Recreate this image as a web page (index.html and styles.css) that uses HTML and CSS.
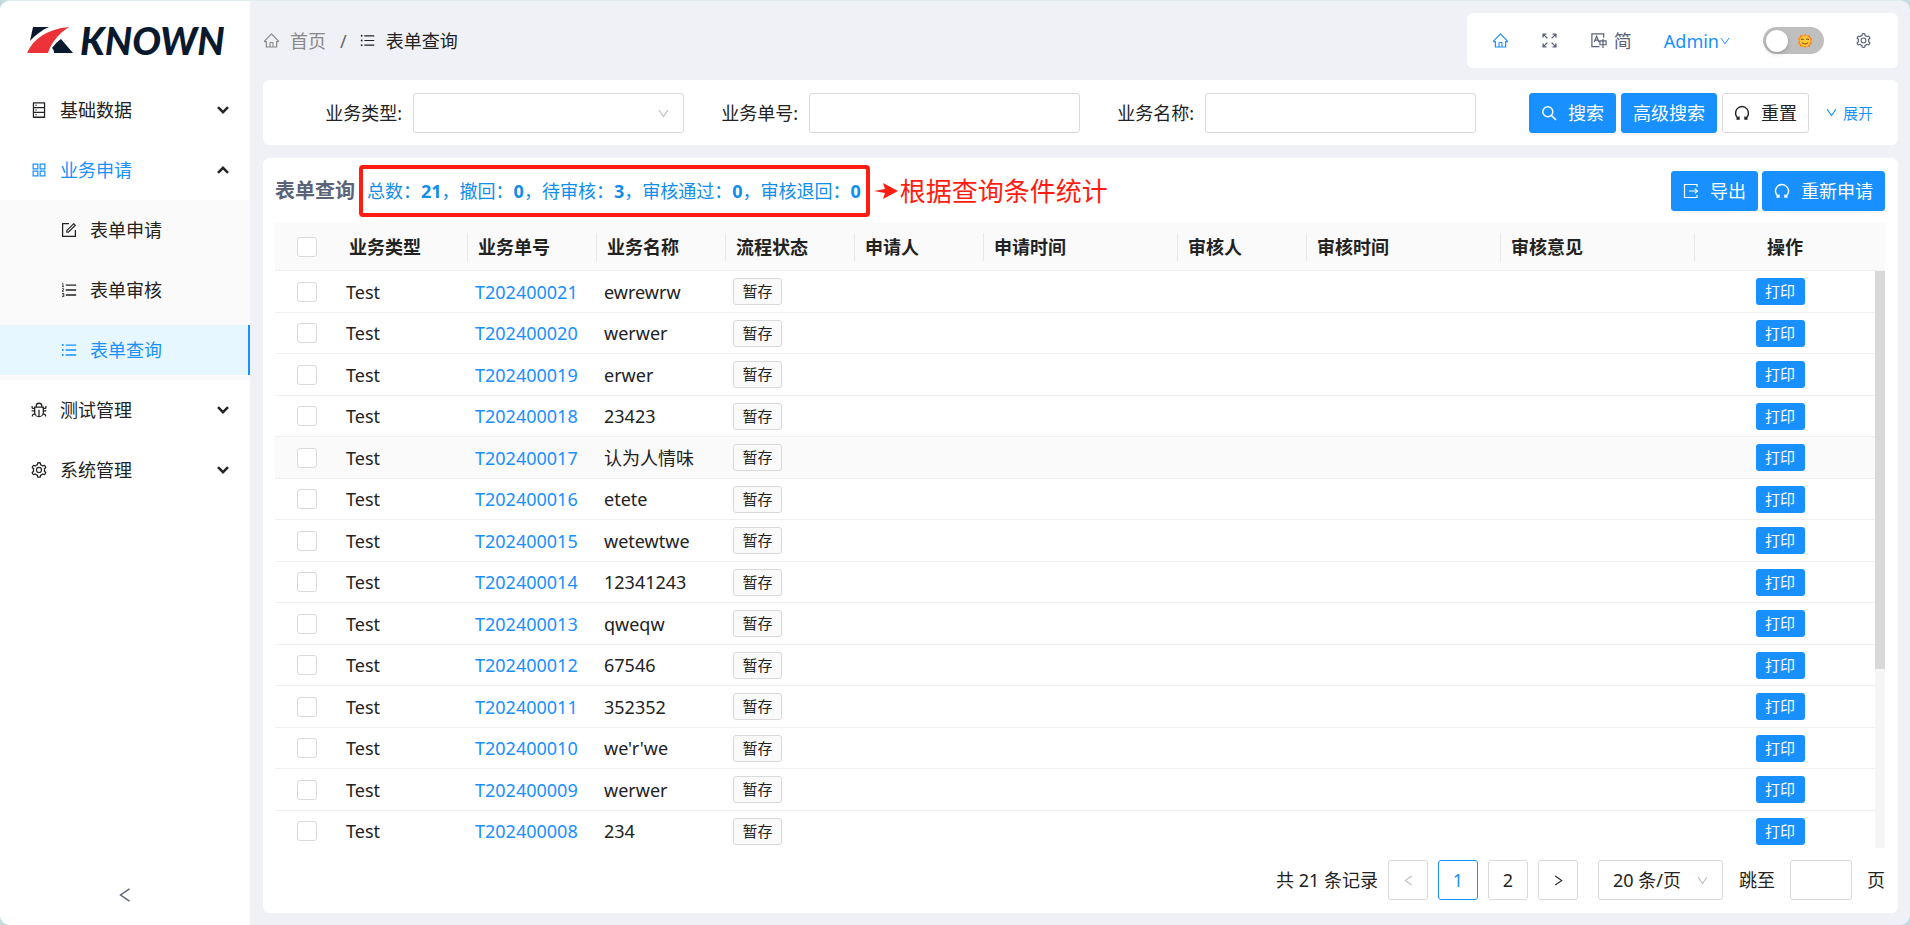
FILE: index.html
```html
<!DOCTYPE html>
<html lang="zh-CN">
<head>
<meta charset="utf-8">
<title>表单查询</title>
<link rel="stylesheet" href="styles.css">
</head>
<body>
<svg class="sprite" aria-hidden="true">
  <symbol id="i-home" viewBox="0 0 1024 1024"><path d="M946.5 505L534.2 92.9a31.5 31.5 0 00-44.4 0L77.5 505a63.9 63.9 0 00-18.8 46c.4 35.2 29.7 63.3 64.9 63.3h42.5V940h691.8V614.3h43.4c17.1 0 33.2-6.7 45.3-18.8a63.6 63.6 0 0018.7-45.3c0-17-6.7-33.1-18.8-45.2zM568 868H456V664h112v204zm217.9-325.7V868H632V640c0-22.1-17.9-40-40-40H432c-22.1 0-40 17.9-40 40v228H238.1V542.3h-96l370-369.7 23.1 23.1L882 542.3h-96.1z"/></symbol>
  <symbol id="i-list" viewBox="0 0 1024 1024"><path d="M320 192h600v72H320zM320 476h600v72H320zM320 760h600v72H320zM104 228a56 56 0 10112 0 56 56 0 10-112 0zM104 512a56 56 0 10112 0 56 56 0 10-112 0zM104 796a56 56 0 10112 0 56 56 0 10-112 0z"/></symbol>
  <symbol id="i-olist" viewBox="0 0 1024 1024"><path d="M328 192h592v72H328zM328 476h592v72H328zM328 760h592v72H328z"/><path class="line" stroke-width="48" d="M120 150h48v170M112 320h112M112 440h96v60l-96 84h112M112 710h104v176H112M136 796h80"/></symbol>
  <symbol id="i-database" viewBox="0 0 1024 1024"><path d="M832 64H192c-17.7 0-32 14.3-32 32v832c0 17.7 14.3 32 32 32h640c17.7 0 32-14.3 32-32V96c0-17.7-14.3-32-32-32zm-600 72h560v208H232V136zm560 480H232V408h560v208zm0 272H232V680h560v208zM304 240a40 40 0 1080 0 40 40 0 10-80 0zm0 272a40 40 0 1080 0 40 40 0 10-80 0zm0 272a40 40 0 1080 0 40 40 0 10-80 0z"/></symbol>
  <symbol id="i-apps" viewBox="0 0 1024 1024"><path class="line" stroke-width="68" d="M178 178h268v268H178zM578 178h268v268H578zM178 578h268v268H178zM578 578h268v268H578z"/></symbol>
  <symbol id="i-form" viewBox="0 0 1024 1024"><path d="M904 512h-56c-4.400 0-8 3.600-8 8v320H184V184h320c4.400 0 8-3.600 8-8v-56c0-4.400-3.600-8-8-8H144c-17.700 0-32 14.300-32 32v736c0 17.700 14.300 32 32 32h736c17.700 0 32-14.300 32-32V520c0-4.400-3.600-8-8-8z"/><path d="M355.900 534.900L354 653.800c-.1 8.900 7.100 16.200 16 16.200h.4l118-2.900c2-.1 4-.9 5.400-2.300l415.900-415c3.100-3.100 3.100-8.200 0-11.300L785.400 114.300c-1.600-1.600-3.600-2.300-5.700-2.300s-4.100.8-5.700 2.300l-415.800 415a8.300 8.300 0 00-2.300 5.600zm63.500 23.600L779.700 199l45.200 45.100-360.500 359.700-45.700 1.100.7-46.400z"/></symbol>
  <symbol id="i-bug" viewBox="0 0 1024 1024"><path class="line" stroke-width="72" d="M268 348h488v300a244 244 0 01-488 0zM352 340v-52a160 160 0 01320 0v52M512 500v380M90 556h170M764 556h170M120 280v90q0 56 60 56h80M904 280v90q0 56-60 56h-80M136 880v-60q0-70 130-92M888 880v-60q0-70-130-92"/></symbol>
  <symbol id="i-gear" viewBox="0 0 1024 1024"><path d="M924.8 625.7l-65.5-56c3.1-19 4.7-38.4 4.7-57.8s-1.6-38.8-4.7-57.8l65.5-56a32.03 32.03 0 009.3-35.2l-.9-2.6a443.74 443.74 0 00-79.7-137.9l-1.8-2.1a32.12 32.12 0 00-35.1-9.5l-81.3 28.9c-30-24.6-63.5-44-99.7-57.6l-15.7-85a32.05 32.05 0 00-25.8-25.7l-2.7-.5c-52.1-9.4-106.9-9.4-159 0l-2.700.5a32.05 32.05 0 00-25.8 25.7l-15.8 85.4a351.86 351.86 0 00-99 57.4l-81.9-29.1a32 32 0 00-35.1 9.5l-1.8 2.1a446.02 446.02 0 00-79.7 137.9l-.9 2.6c-4.5 12.5-.8 26.5 9.3 35.2l66.3 56.6c-3.1 18.8-4.6 38-4.6 57.1 0 19.2 1.5 38.4 4.6 57.1L99 625.5a32.03 32.03 0 00-9.300 35.200l.9 2.600c18.100 50.400 44.900 96.900 79.700 137.900l1.800 2.100a32.12 32.12 0 0035.100 9.500l81.900-29.100c29.800 24.500 63.100 43.900 99 57.400l15.800 85.400a32.05 32.05 0 0025.800 25.700l2.700.5a449.4 449.4 0 00159 0l2.700-.5a32.05 32.05 0 0025.800-25.700l15.700-85a350 350 0 0099.700-57.600l81.300 28.900a32 32 0 0035.100-9.500l1.800-2.100c34.800-41.100 61.600-87.500 79.700-137.900l.9-2.600c4.500-12.300.8-26.300-9.300-35zM788.300 465.900c2.500 15.100 3.800 30.600 3.800 46.100s-1.300 31-3.800 46.100l-6.600 40.100 74.700 63.900a370.03 370.03 0 01-42.600 73.600L721 702.800l-31.400 25.800c-23.900 19.600-50.500 35-79.300 45.800l-38.100 14.300-17.900 97a377.5 377.5 0 01-85 0l-17.900-97.200-37.800-14.500c-28.500-10.800-55-26.200-78.700-45.700l-31.400-25.900-93.400 33.200c-17-22.900-31.200-47.600-42.600-73.600l75.500-64.500-6.500-40c-2.400-14.900-3.700-30.300-3.700-45.500 0-15.300 1.200-30.600 3.700-45.500l6.500-40-75.500-64.500c11.300-26.100 25.600-50.700 42.600-73.600l93.400 33.200 31.400-25.900c23.700-19.500 50.200-34.900 78.700-45.700l37.900-14.300 17.900-97.200c28.100-3.200 56.800-3.200 85 0l17.900 97 38.100 14.300c28.700 10.800 55.400 26.200 79.300 45.800l31.400 25.800 92.800-32.900c17 22.900 31.200 47.600 42.600 73.600L781.800 426l6.500 39.900z"/><circle class="line" stroke-width="66" cx="512" cy="508" r="144"/></symbol>
  <symbol id="i-full" viewBox="0 0 16 16"><path class="line" stroke-width="1.300" d="M2 5.200V2h3.200M2 2l4 4M10.800 2H14v3.200M14 2l-4 4M2 10.800V14h3.200M2 14l4-4M14 10.800V14h-3.200M14 14l-4-4"/></symbol>
  <symbol id="i-lang" viewBox="0 0 18 18"><path class="line" stroke-width="1.300" d="M14.500 6V2H2v13.500h8M4.500 10.500l2.500-6 2.500 6M5.400 8.500h3.200M10.500 9.500h6.500v4h-6.500zM13.750 7.500v9.500"/></symbol>
  <symbol id="i-down" viewBox="0 0 16 16"><path class="line" stroke-width="1.300" d="M2.500 3.800L8 11.800l5.500-8"/></symbol>
  <symbol id="i-left" viewBox="0 0 16 16"><path class="line" stroke-width="1.300" d="M12 2.500L4 8l8 5.500"/></symbol>
  <symbol id="i-right" viewBox="0 0 16 16"><path class="line" stroke-width="1.300" d="M4 2.500L12 8l-8 5.500"/></symbol>
  <symbol id="i-arrow" viewBox="0 0 14 14"><path class="line" stroke-width="2.400" d="M2 4.200l5 5 5-5"/></symbol>
  <symbol id="i-search" viewBox="0 0 16 16"><circle class="line" stroke-width="1.400" cx="6.800" cy="6.800" r="5"/><path class="line" stroke-width="1.600" d="M10.400 10.400l4.600 4.600"/></symbol>
  <symbol id="i-redo" viewBox="0 0 16 16"><path class="line" stroke-width="1.400" d="M4.600 13.600A6.500 6.500 0 1111.400 13.600M2.400 14h2.600v-2.400M13.600 14H11v-2.400"/></symbol>
  <symbol id="i-export" viewBox="0 0 16 16"><path class="line" stroke-width="1.200" d="M14 4V1.500H1.500v13H14V12M6 8h8.200M11.800 5.600L14.500 8l-2.700 2.400"/></symbol>
</svg>

<div class="app">
  <aside class="side">
    <a class="logo" href="#">
      <svg class="logo-mark" viewBox="0 0 46 28" aria-hidden="true">
        <path fill="#0a1a2e" d="M6 1h16C15 4 8 9 3 15z"/>
        <path fill="#eb3338" d="M42 1C20 3 6 13 0 27h21C24 17 31 8 42 1z"/>
        <path fill="#0a1a2e" d="M34 13l12 14H27c0-3-1-4-2-5 3-4 6-7 9-9z"/>
      </svg>
      <span class="logo-name">KNOWN</span>
    </a>
    <nav class="menu">
      <a class="item" href="#"><svg class="icon"><use href="#i-database"/></svg><span class="item-text">基础数据</span><svg class="arrow"><use href="#i-arrow"/></svg></a>
      <a class="item active" href="#"><svg class="icon"><use href="#i-apps"/></svg><span class="item-text">业务申请</span><svg class="arrow up"><use href="#i-arrow"/></svg></a>
      <div class="submenu">
        <a class="item" href="#"><svg class="icon"><use href="#i-form"/></svg><span class="item-text">表单申请</span></a>
        <a class="item" href="#"><svg class="icon"><use href="#i-olist"/></svg><span class="item-text">表单审核</span></a>
        <a class="item selected" href="#"><svg class="icon"><use href="#i-list"/></svg><span class="item-text">表单查询</span></a>
      </div>
      <a class="item" href="#"><svg class="icon"><use href="#i-bug"/></svg><span class="item-text">测试管理</span><svg class="arrow"><use href="#i-arrow"/></svg></a>
      <a class="item" href="#"><svg class="icon"><use href="#i-gear"/></svg><span class="item-text">系统管理</span><svg class="arrow"><use href="#i-arrow"/></svg></a>
    </nav>
    <button class="collapse" type="button" aria-label="收起菜单"><svg class="icon"><use href="#i-left"/></svg></button>
  </aside>

  <main class="main">
    <header class="top">
      <nav class="crumbs">
        <a class="crumb" href="#"><svg class="icon"><use href="#i-home"/></svg>首页</a>
        <span class="slash">/</span>
        <span class="crumb current"><svg class="icon"><use href="#i-list"/></svg>表单查询</span>
      </nav>
      <div class="tools">
        <a class="tool blue" href="#" aria-label="首页"><svg class="icon"><use href="#i-home"/></svg></a>
        <button class="tool" type="button" aria-label="全屏"><svg class="icon"><use href="#i-full"/></svg></button>
        <button class="tool" type="button"><svg class="icon"><use href="#i-lang"/></svg>简</button>
        <a class="tool blue user" href="#">Admin<svg class="caret"><use href="#i-down"/></svg></a>
        <button class="switch" type="button" role="switch" aria-checked="false" aria-label="主题">
          <span class="knob"></span>
          <svg class="sun" viewBox="0 0 18 18" aria-hidden="true">
            <path fill="#ff8a1c" d="M9 1l2 2 3-1 1 3 2 1-1 3 1 3-2 1-1 3-3-1-2 2-2-2-3 1-1-3-2-1 1-3-1-3 2-1 1-3 3 1z"/>
            <circle cx="9" cy="9" r="6" fill="#ffc83d"/>
            <path fill="none" stroke="#7a4a12" stroke-width="1.200" d="M4.500 7.500q1.500-1.500 3 0M10.500 7.500q1.500-1.500 3 0M5.500 10.800q3.500 3 7 0"/>
          </svg>
        </button>
        <button class="tool" type="button" aria-label="设置"><svg class="icon"><use href="#i-gear"/></svg></button>
      </div>
    </header>

    <form class="card search">
      <div class="field"><label for="f-type">业务类型:</label><span class="pick"><select id="f-type"><option></option></select><svg class="caret"><use href="#i-down"/></svg></span></div>
      <div class="field"><label for="f-no">业务单号:</label><input id="f-no" type="text"></div>
      <div class="field"><label for="f-name">业务名称:</label><input id="f-name" type="text"></div>
      <div class="actions">
        <button class="btn primary" type="button"><svg class="icon"><use href="#i-search"/></svg>搜索</button>
        <button class="btn primary" type="button">高级搜索</button>
        <button class="btn" type="button"><svg class="icon"><use href="#i-redo"/></svg>重置</button>
        <a class="expand" href="#"><svg class="caret"><use href="#i-down"/></svg>展开</a>
      </div>
    </form>

    <section class="card list">
      <div class="bar">
        <h1 class="title">表单查询</h1>
        <div class="stats">总数：<b>21</b>，撤回：<b>0</b>，待审核：<b>3</b>，审核通过：<b>0</b>，审核退回：<b>0</b></div>
        <div class="note"><svg class="pointer" viewBox="0 0 24 18" aria-hidden="true"><path d="M0 9l11-2-2-6 15 8-15 8 2-6z"/></svg>根据查询条件统计</div>
        <div class="bar-buttons">
          <button class="btn primary" type="button"><svg class="icon"><use href="#i-export"/></svg>导出</button>
          <button class="btn primary" type="button"><svg class="icon"><use href="#i-redo"/></svg>重新申请</button>
        </div>
      </div>

      <table class="grid head">
        <colgroup><col class="c-check"><col class="c-s"><col class="c-s"><col class="c-s"><col class="c-s"><col class="c-s"><col class="c-l"><col class="c-s"><col class="c-l"><col class="c-l"><col><col class="c-bar"></colgroup>
        <thead><tr><th class="check"><input type="checkbox" aria-label="全选"></th><th><span>业务类型</span></th><th><span>业务单号</span></th><th><span>业务名称</span></th><th><span>流程状态</span></th><th><span>申请人</span></th><th><span>申请时间</span></th><th><span>审核人</span></th><th><span>审核时间</span></th><th><span>审核意见</span></th><th class="op">操作</th><th class="gutter"></th></tr></thead>
      </table>
      <div class="scroll">
        <div class="view">
          <table class="grid body">
            <colgroup><col class="c-check"><col class="c-s"><col class="c-s"><col class="c-s"><col class="c-s"><col class="c-s"><col class="c-l"><col class="c-s"><col class="c-l"><col class="c-l"><col></colgroup>
            <tbody>
              <tr><td class="check"><input type="checkbox" aria-label="选择"></td><td>Test</td><td><a href="#">T202400021</a></td><td>ewrewrw</td><td><span class="tag">暂存</span></td><td></td><td></td><td></td><td></td><td></td><td class="op"><button class="print" type="button">打印</button></td></tr>
              <tr><td class="check"><input type="checkbox" aria-label="选择"></td><td>Test</td><td><a href="#">T202400020</a></td><td>werwer</td><td><span class="tag">暂存</span></td><td></td><td></td><td></td><td></td><td></td><td class="op"><button class="print" type="button">打印</button></td></tr>
              <tr><td class="check"><input type="checkbox" aria-label="选择"></td><td>Test</td><td><a href="#">T202400019</a></td><td>erwer</td><td><span class="tag">暂存</span></td><td></td><td></td><td></td><td></td><td></td><td class="op"><button class="print" type="button">打印</button></td></tr>
              <tr><td class="check"><input type="checkbox" aria-label="选择"></td><td>Test</td><td><a href="#">T202400018</a></td><td>23423</td><td><span class="tag">暂存</span></td><td></td><td></td><td></td><td></td><td></td><td class="op"><button class="print" type="button">打印</button></td></tr>
              <tr class="hover"><td class="check"><input type="checkbox" aria-label="选择"></td><td>Test</td><td><a href="#">T202400017</a></td><td>认为人情味</td><td><span class="tag">暂存</span></td><td></td><td></td><td></td><td></td><td></td><td class="op"><button class="print" type="button">打印</button></td></tr>
              <tr><td class="check"><input type="checkbox" aria-label="选择"></td><td>Test</td><td><a href="#">T202400016</a></td><td>etete</td><td><span class="tag">暂存</span></td><td></td><td></td><td></td><td></td><td></td><td class="op"><button class="print" type="button">打印</button></td></tr>
              <tr><td class="check"><input type="checkbox" aria-label="选择"></td><td>Test</td><td><a href="#">T202400015</a></td><td>wetewtwe</td><td><span class="tag">暂存</span></td><td></td><td></td><td></td><td></td><td></td><td class="op"><button class="print" type="button">打印</button></td></tr>
              <tr><td class="check"><input type="checkbox" aria-label="选择"></td><td>Test</td><td><a href="#">T202400014</a></td><td>12341243</td><td><span class="tag">暂存</span></td><td></td><td></td><td></td><td></td><td></td><td class="op"><button class="print" type="button">打印</button></td></tr>
              <tr><td class="check"><input type="checkbox" aria-label="选择"></td><td>Test</td><td><a href="#">T202400013</a></td><td>qweqw</td><td><span class="tag">暂存</span></td><td></td><td></td><td></td><td></td><td></td><td class="op"><button class="print" type="button">打印</button></td></tr>
              <tr><td class="check"><input type="checkbox" aria-label="选择"></td><td>Test</td><td><a href="#">T202400012</a></td><td>67546</td><td><span class="tag">暂存</span></td><td></td><td></td><td></td><td></td><td></td><td class="op"><button class="print" type="button">打印</button></td></tr>
              <tr><td class="check"><input type="checkbox" aria-label="选择"></td><td>Test</td><td><a href="#">T202400011</a></td><td>352352</td><td><span class="tag">暂存</span></td><td></td><td></td><td></td><td></td><td></td><td class="op"><button class="print" type="button">打印</button></td></tr>
              <tr><td class="check"><input type="checkbox" aria-label="选择"></td><td>Test</td><td><a href="#">T202400010</a></td><td>we'r'we</td><td><span class="tag">暂存</span></td><td></td><td></td><td></td><td></td><td></td><td class="op"><button class="print" type="button">打印</button></td></tr>
              <tr><td class="check"><input type="checkbox" aria-label="选择"></td><td>Test</td><td><a href="#">T202400009</a></td><td>werwer</td><td><span class="tag">暂存</span></td><td></td><td></td><td></td><td></td><td></td><td class="op"><button class="print" type="button">打印</button></td></tr>
              <tr><td class="check"><input type="checkbox" aria-label="选择"></td><td>Test</td><td><a href="#">T202400008</a></td><td>234</td><td><span class="tag">暂存</span></td><td></td><td></td><td></td><td></td><td></td><td class="op"><button class="print" type="button">打印</button></td></tr>
            </tbody>
          </table>
        </div>
        <div class="track"><div class="thumb"></div></div>
      </div>

      <div class="pager">
        <span class="total">共 21 条记录</span>
        <button class="page" type="button" disabled aria-label="上一页"><svg class="caret"><use href="#i-left"/></svg></button>
        <button class="page on" type="button">1</button>
        <button class="page" type="button">2</button>
        <button class="page" type="button" aria-label="下一页"><svg class="caret"><use href="#i-right"/></svg></button>
        <span class="pick size"><select aria-label="每页条数"><option>20 条/页</option></select><svg class="caret"><use href="#i-down"/></svg></span>
        <label for="f-jump">跳至</label>
        <input class="jump" id="f-jump" type="text">
        <span>页</span>
      </div>
    </section>
  </main>
</div>
</body>
</html>
```
FILE: styles.css
```css
* { box-sizing: border-box; }
body {
  margin: 0;
  background: #c3dcdf;
  color: #222;
  font: 18px/24px "Noto Sans", "Noto Sans CJK SC", sans-serif;
}
a { color: inherit; text-decoration: none; }
button, input, select { font: inherit; color: inherit; margin: 0; }
svg { flex: none; fill: currentColor; }
.line { fill: none; stroke: currentColor; }
.sprite { position: absolute; width: 0; height: 0; }
.icon { width: 18px; height: 18px; }
.caret { width: 13px; height: 13px; }

.app {
  display: flex;
  height: 100vh;
  border-radius: 10px;
  overflow: hidden;
  background: #eff1f6;
  border-top: 1px solid #e3edf0;
}

/* sidebar */
.side { flex: none; display: flex; flex-direction: column; width: 250px; background: #fff; }
.logo { display: flex; align-items: center; gap: 7px; height: 79px; padding: 0 27px 2px; }
.logo-mark { width: 46px; height: 28px; }
.logo-name { font: italic 900 38px/38px Lato, sans-serif; color: #0a1a2e; }
.menu { flex: 1; }
.item { display: flex; align-items: center; height: 60px; padding: 0 20px 0 30px; }
.item-text { flex: 1; padding-left: 12px; }
.arrow { width: 14px; height: 14px; color: #222; }
.arrow.up { transform: rotate(180deg); }
.active { color: #1890ff; }
.submenu { display: flex; flex-direction: column; gap: 10px; padding: 5px 0; background: #fafafa; }
.submenu .item { height: 50px; padding-left: 60px; }
.submenu .selected { background: #e6f7ff; color: #1890ff; border-right: 2px solid #1890ff; }
.collapse { display: flex; align-items: center; justify-content: center; height: 60px; border: 0; background: none; color: #5b6378; }

/* main column */
.main { flex: 1; display: flex; flex-direction: column; gap: 12px; min-width: 0; padding: 12px 12px 12px 13px; }
.top { display: flex; align-items: center; justify-content: space-between; height: 55px; }
.crumbs { display: flex; align-items: center; gap: 14px; color: #888; }
.crumb { display: flex; align-items: center; gap: 10px; }
.crumb .icon { width: 17px; height: 17px; }
.current { color: #222; margin-left: -2px; }
.slash { color: #666; }
.tools { display: flex; align-items: center; height: 55px; padding: 0 26px 0 25px; border-radius: 6px; background: #fff; color: #5b6378; }
.tool { display: flex; align-items: center; gap: 7px; padding: 0; border: 0; background: none; margin-right: 32px; }
.tool .icon { width: 17px; height: 17px; }
.tool.blue { color: #1890ff; }
.tool.user { gap: 0; }
.user .caret { width: 12px; height: 12px; }
.tool:last-child { margin-right: 0; }
.switch { display: flex; align-items: center; justify-content: space-between; width: 61px; height: 27px; margin-right: 31px; padding: 0 11px 0 3px; border: 0; border-radius: 14px; background: #bfbfbf; }
.knob { width: 22px; height: 22px; border-radius: 50%; background: #fff; box-shadow: 0 2px 4px rgba(0, 35, 11, 0.2); }
.sun { width: 16px; height: 16px; }

.card { border-radius: 6px; background: #fff; }

/* controls */
input[type="text"], select { height: 40px; padding: 0 14px; border: 1px solid #d9d9d9; border-radius: 3px; background: #fff; }
select { appearance: none; width: 100%; }
.pick { position: relative; display: block; }
.pick .caret { position: absolute; right: 14px; top: 14px; color: #bfbfbf; }
.btn { display: flex; align-items: center; gap: 11px; height: 40px; padding: 0 11px; border: 1px solid #d9d9d9; border-radius: 3px; background: #fff; white-space: nowrap; }
.btn .icon { width: 16px; height: 16px; }
.primary { background: #1890ff; border-color: #1890ff; color: #fff; box-shadow: 0 2px 0 rgba(0, 0, 0, 0.04); }

/* search */
.search { display: flex; align-items: center; height: 65px; padding: 0 25px; }
.field { display: flex; align-items: center; flex: 0 1 396px; min-width: 0; }
.field label { flex: none; width: 125px; padding-right: 11px; text-align: right; }
.field input, .field .pick { flex: 1; min-width: 0; }
.actions { display: flex; align-items: center; gap: 5px; margin-left: auto; }
.expand { display: flex; align-items: center; gap: 5px; margin-left: 11px; font-size: 15px; color: #1890ff; }

/* list */
.list { flex: 1; display: flex; flex-direction: column; min-height: 0; margin-top: 1px; padding: 0 13px 13px 12px; }
.bar { display: flex; align-items: center; height: 65px; }
.title { margin: 0; font-size: 20px; line-height: 24px; font-weight: 700; color: #5b6378; }
.stats { height: 52px; margin-left: 4px; padding: 0 5px 0 4px; border: 4px solid #ff1c10; border-radius: 4px; color: #108ee9; line-height: 44px; white-space: nowrap; }
.note { display: flex; align-items: center; gap: 2px; margin-left: 4px; color: #ff1c10; font-size: 26px; line-height: 32px; }
.pointer { width: 24px; height: 18px; }
.bar-buttons { display: flex; gap: 4px; margin-left: auto; }

.grid { width: 100%; table-layout: fixed; border-collapse: separate; border-spacing: 0; }
.c-check { width: 64px; }
.c-s { width: 129px; }
.c-l { width: 194px; }
.c-bar { width: 10px; }
.grid th, .grid td { padding: 0 7px; border-bottom: 1px solid #f0f0f0; text-align: left; white-space: nowrap; }
.grid th { height: 48px; padding: 0; background: #fafafa; font-weight: 700; }
.grid th span { display: block; padding-left: 10px; line-height: 28px; border-right: 1px solid #e8e8e8; }
.grid .check, .grid .op { text-align: center; }
.grid .check { padding: 0; }
.grid td { height: 41px; }
.grid tr:nth-child(odd) td { height: 42px; }
.grid td a { color: #1890ff; }
.hover td { background: #fafafa; }
.grid td.op { padding-right: 17px; }
input[type="checkbox"] { appearance: none; display: block; width: 20px; height: 20px; margin: 0 22px; border: 1px solid #d9d9d9; border-radius: 3px; background: #fff; }
.tag { display: block; width: 49px; height: 27px; border: 1px solid #d9d9d9; border-radius: 3px; background: #fafafa; font-size: 15px; line-height: 25px; text-align: center; }
.print { width: 49px; height: 27px; padding: 0; border: 0; border-radius: 3px; background: #1890ff; color: #fff; font-size: 15px; line-height: 27px; vertical-align: middle; }
.scroll { flex: 1; display: flex; min-height: 0; }
.view { flex: 1; overflow: hidden; }
.track { width: 10px; background: #f5f5f5; }
.thumb { height: 69%; background: #d9d9d9; }

/* pager */
.pager { display: flex; align-items: center; justify-content: flex-end; gap: 10px; padding-top: 12px; }
.page { display: flex; align-items: center; justify-content: center; width: 40px; height: 40px; padding: 0; border: 1px solid #d9d9d9; border-radius: 3px; background: #fff; }
.page:disabled { color: #bfbfbf; }
.page.on { border-color: #1890ff; color: #1890ff; }
.size { width: 125px; margin: 0 6px 0 10px; }
.pager .jump { width: 62px; margin: 0 5px; }
```
